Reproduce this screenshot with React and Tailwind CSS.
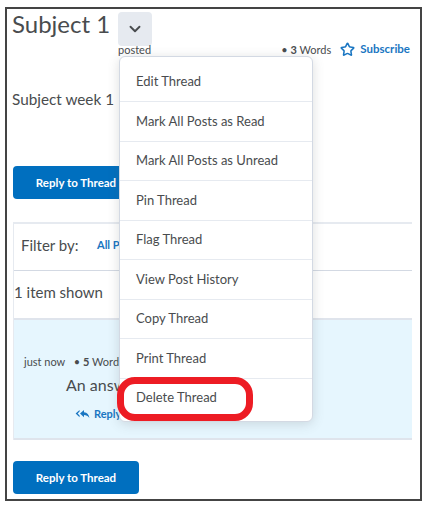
/**
 * Discussion thread view with the thread actions menu open.
 */
import { ChevronDown, Star } from 'lucide-react';

const MENU_ITEMS = [
  'Edit Thread',
  'Mark All Posts as Read',
  'Mark All Posts as Unread',
  'Pin Thread',
  'Flag Thread',
  'View Post History',
  'Copy Thread',
  'Print Thread',
  'Delete Thread',
];

function ReplyButton() {
  return (
    <button className="w-[126px] h-[33px] rounded-[4px] bg-[#006fbf] text-white text-[11.5px] font-bold">
      Reply to Thread
    </button>
  );
}

function ReplyAllIcon() {
  return (
    <svg width="15" height="10" viewBox="0 0 15 10" fill="#1a76c2">
      <path d="M4.6 1 L0.6 4.6 L4.6 8.2 L4.6 6.6 L2.6 4.6 L4.6 2.6 Z" />
      <path d="M9 1 L5 4.6 L9 8.2 L9 6 C11.2 6 12.8 6.8 14.4 9 C14 5.8 12.2 3.4 9 3.2 Z" />
    </svg>
  );
}

function ThreadMenu() {
  const lastIndex = MENU_ITEMS.length - 1;
  return (
    <div className="absolute left-[112px] top-[47px] w-[194px] h-[366px] flex flex-col bg-white border border-[#d3d9e3] rounded-[6px] shadow-[0_2px_12px_rgba(86,90,92,0.2)]">
      {MENU_ITEMS.map((item, i) => (
        <div
          key={item}
          className={`flex items-center pl-[16px] text-[13px] text-[#494c4e] ${i > 0 ? 'border-t border-[#e6eaf0]' : ''} ${i === 0 ? 'h-[44px] pt-[6px] shrink-0' : ''} ${i === lastIndex ? 'h-[43px] pb-[5px] shrink-0' : ''} ${i > 0 && i < lastIndex ? 'flex-1' : ''}`}
        >
          {item}
        </div>
      ))}
    </div>
  );
}

export default function App() {
  return (
    <div className="w-[429px] h-[509px] bg-white pl-[5px] pt-[7px] font-['Lato',sans-serif] overflow-hidden">
      <div className="relative w-[417px] h-[494px] border-2 border-[#444444] pl-[5px] text-[#494c4e]">
        <div className="flex items-start h-[35px] pt-[3px]">
          <h1 className="-mt-[3px] text-[24px] leading-[30px] font-normal text-[#494c4e] w-[106px]">Subject 1</h1>
          <div className="w-[34px] h-[34px] rounded-[4px] bg-[#e6eaf0] flex items-center justify-center">
            <ChevronDown size={18} strokeWidth={2.5} color="#494c4e" />
          </div>
        </div>

        <div className="flex items-center h-[12px] text-[11px] pl-[106px] pr-[10px]">
          <span>posted</span>
          <span className="ml-auto">
            • <b>3</b> Words
          </span>
          <Star size={15} strokeWidth={2.5} color="#1a76c2" className="ml-[9px] mr-[5px] -mt-[2px]" />
          <span className="-mt-[3px] font-bold text-[11.5px] text-[#1a76c2]">Subscribe</span>
        </div>

        <p className="mt-[33px] text-[15.3px] leading-[20px]">Subject week 1</p>

        <div className="pl-[1px] mt-[57px]">
          <ReplyButton />
        </div>

        <div className="ml-[1px] mr-[8px] mt-[23px] border-l border-[#e6eaf0]">
          <div className="h-[48px] flex items-center pl-[7px] pb-[4px] border-t-2 border-[#e6eaf0]">
            <span className="text-[15px] w-[76px]">Filter by:</span>
            <span className="text-[11px] font-bold text-[#1a76c2]">All Posts</span>
          </div>
          <div className="h-[48px] flex items-center pb-[4px] border-t border-[#d3d9e3] text-[15px]">
            1 item shown
          </div>
          <div className="h-[122px] pl-[10px] pt-[34px] bg-[#e6f6fe] border-t-2 border-b-2 border-[#dfe4ec]">
            <div className="text-[11px] leading-[16px]">
              just now <span className="ml-[6px]">• <b>5</b> Words</span>
            </div>
            <p className="ml-[42px] mt-[5px] text-[16px] leading-[20px]">An answer</p>
            <div className="ml-[51px] mt-[11px] flex items-center gap-[4px] text-[11px] font-bold text-[#1a76c2]">
              <ReplyAllIcon />
              Reply
            </div>
          </div>
        </div>

        <div className="pl-[1px] mt-[21px]">
          <ReplyButton />
        </div>

        <ThreadMenu />

        {/* red annotation around the last item */}
        <div className="absolute left-[110px] top-[368px] w-[136px] h-[44px] border-[7px] border-[#ed1c24] rounded-[18px]" />
      </div>
    </div>
  );
}
